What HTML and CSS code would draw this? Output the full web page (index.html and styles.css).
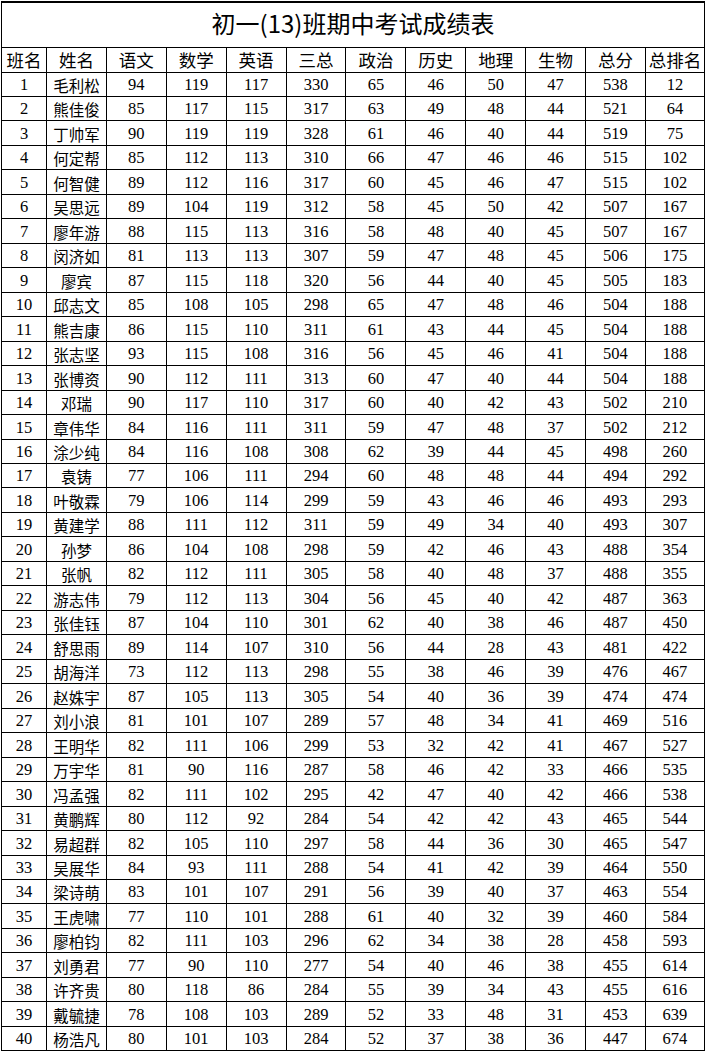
FILE: index.html
```html
<!DOCTYPE html>
<html lang="zh-CN">
<head>
<meta charset="utf-8">
<title>初一(13)班期中考试成绩表</title>
<link rel="stylesheet" href="styles.css">
</head>
<body>
<table class="sheet">
  <colgroup>
    <col class="c-no"><col class="c-w"><col class="c-w"><col class="c-w"><col class="c-w"><col class="c-w"><col class="c-w"><col class="c-w"><col class="c-w"><col class="c-w"><col class="c-w"><col class="c-last">
  </colgroup>
  <thead>
    <tr class="title-row"><th colspan="12" class="title">初一(13)班期中考试成绩表</th></tr>
    <tr class="head-row"><th>班名</th><th>姓名</th><th>语文</th><th>数学</th><th>英语</th><th>三总</th><th>政治</th><th>历史</th><th>地理</th><th>生物</th><th>总分</th><th>总排名</th></tr>
  </thead>
  <tbody id="rows">
    <tr><td>1</td><td class="nm">毛利松</td><td>94</td><td>119</td><td>117</td><td>330</td><td>65</td><td>46</td><td>50</td><td>47</td><td>538</td><td>12</td></tr>
    <tr><td>2</td><td class="nm">熊佳俊</td><td>85</td><td>117</td><td>115</td><td>317</td><td>63</td><td>49</td><td>48</td><td>44</td><td>521</td><td>64</td></tr>
    <tr><td>3</td><td class="nm">丁帅军</td><td>90</td><td>119</td><td>119</td><td>328</td><td>61</td><td>46</td><td>40</td><td>44</td><td>519</td><td>75</td></tr>
    <tr><td>4</td><td class="nm">何定帮</td><td>85</td><td>112</td><td>113</td><td>310</td><td>66</td><td>47</td><td>46</td><td>46</td><td>515</td><td>102</td></tr>
    <tr><td>5</td><td class="nm">何智健</td><td>89</td><td>112</td><td>116</td><td>317</td><td>60</td><td>45</td><td>46</td><td>47</td><td>515</td><td>102</td></tr>
    <tr><td>6</td><td class="nm">吴思远</td><td>89</td><td>104</td><td>119</td><td>312</td><td>58</td><td>45</td><td>50</td><td>42</td><td>507</td><td>167</td></tr>
    <tr><td>7</td><td class="nm">廖年游</td><td>88</td><td>115</td><td>113</td><td>316</td><td>58</td><td>48</td><td>40</td><td>45</td><td>507</td><td>167</td></tr>
    <tr><td>8</td><td class="nm">闵济如</td><td>81</td><td>113</td><td>113</td><td>307</td><td>59</td><td>47</td><td>48</td><td>45</td><td>506</td><td>175</td></tr>
    <tr><td>9</td><td class="nm">廖宾</td><td>87</td><td>115</td><td>118</td><td>320</td><td>56</td><td>44</td><td>40</td><td>45</td><td>505</td><td>183</td></tr>
    <tr><td>10</td><td class="nm">邱志文</td><td>85</td><td>108</td><td>105</td><td>298</td><td>65</td><td>47</td><td>48</td><td>46</td><td>504</td><td>188</td></tr>
    <tr><td>11</td><td class="nm">熊吉康</td><td>86</td><td>115</td><td>110</td><td>311</td><td>61</td><td>43</td><td>44</td><td>45</td><td>504</td><td>188</td></tr>
    <tr><td>12</td><td class="nm">张志坚</td><td>93</td><td>115</td><td>108</td><td>316</td><td>56</td><td>45</td><td>46</td><td>41</td><td>504</td><td>188</td></tr>
    <tr><td>13</td><td class="nm">张博资</td><td>90</td><td>112</td><td>111</td><td>313</td><td>60</td><td>47</td><td>40</td><td>44</td><td>504</td><td>188</td></tr>
    <tr><td>14</td><td class="nm">邓瑞</td><td>90</td><td>117</td><td>110</td><td>317</td><td>60</td><td>40</td><td>42</td><td>43</td><td>502</td><td>210</td></tr>
    <tr><td>15</td><td class="nm">章伟华</td><td>84</td><td>116</td><td>111</td><td>311</td><td>59</td><td>47</td><td>48</td><td>37</td><td>502</td><td>212</td></tr>
    <tr><td>16</td><td class="nm">涂少纯</td><td>84</td><td>116</td><td>108</td><td>308</td><td>62</td><td>39</td><td>44</td><td>45</td><td>498</td><td>260</td></tr>
    <tr><td>17</td><td class="nm">袁铸</td><td>77</td><td>106</td><td>111</td><td>294</td><td>60</td><td>48</td><td>48</td><td>44</td><td>494</td><td>292</td></tr>
    <tr><td>18</td><td class="nm">叶敬霖</td><td>79</td><td>106</td><td>114</td><td>299</td><td>59</td><td>43</td><td>46</td><td>46</td><td>493</td><td>293</td></tr>
    <tr><td>19</td><td class="nm">黄建学</td><td>88</td><td>111</td><td>112</td><td>311</td><td>59</td><td>49</td><td>34</td><td>40</td><td>493</td><td>307</td></tr>
    <tr><td>20</td><td class="nm">孙梦</td><td>86</td><td>104</td><td>108</td><td>298</td><td>59</td><td>42</td><td>46</td><td>43</td><td>488</td><td>354</td></tr>
    <tr><td>21</td><td class="nm">张帆</td><td>82</td><td>112</td><td>111</td><td>305</td><td>58</td><td>40</td><td>48</td><td>37</td><td>488</td><td>355</td></tr>
    <tr><td>22</td><td class="nm">游志伟</td><td>79</td><td>112</td><td>113</td><td>304</td><td>56</td><td>45</td><td>40</td><td>42</td><td>487</td><td>363</td></tr>
    <tr><td>23</td><td class="nm">张佳钰</td><td>87</td><td>104</td><td>110</td><td>301</td><td>62</td><td>40</td><td>38</td><td>46</td><td>487</td><td>450</td></tr>
    <tr><td>24</td><td class="nm">舒思雨</td><td>89</td><td>114</td><td>107</td><td>310</td><td>56</td><td>44</td><td>28</td><td>43</td><td>481</td><td>422</td></tr>
    <tr><td>25</td><td class="nm">胡海洋</td><td>73</td><td>112</td><td>113</td><td>298</td><td>55</td><td>38</td><td>46</td><td>39</td><td>476</td><td>467</td></tr>
    <tr><td>26</td><td class="nm">赵姝宇</td><td>87</td><td>105</td><td>113</td><td>305</td><td>54</td><td>40</td><td>36</td><td>39</td><td>474</td><td>474</td></tr>
    <tr><td>27</td><td class="nm">刘小浪</td><td>81</td><td>101</td><td>107</td><td>289</td><td>57</td><td>48</td><td>34</td><td>41</td><td>469</td><td>516</td></tr>
    <tr><td>28</td><td class="nm">王明华</td><td>82</td><td>111</td><td>106</td><td>299</td><td>53</td><td>32</td><td>42</td><td>41</td><td>467</td><td>527</td></tr>
    <tr><td>29</td><td class="nm">万宇华</td><td>81</td><td>90</td><td>116</td><td>287</td><td>58</td><td>46</td><td>42</td><td>33</td><td>466</td><td>535</td></tr>
    <tr><td>30</td><td class="nm">冯孟强</td><td>82</td><td>111</td><td>102</td><td>295</td><td>42</td><td>47</td><td>40</td><td>42</td><td>466</td><td>538</td></tr>
    <tr><td>31</td><td class="nm">黄鹏辉</td><td>80</td><td>112</td><td>92</td><td>284</td><td>54</td><td>42</td><td>42</td><td>43</td><td>465</td><td>544</td></tr>
    <tr><td>32</td><td class="nm">易超群</td><td>82</td><td>105</td><td>110</td><td>297</td><td>58</td><td>44</td><td>36</td><td>30</td><td>465</td><td>547</td></tr>
    <tr><td>33</td><td class="nm">吴展华</td><td>84</td><td>93</td><td>111</td><td>288</td><td>54</td><td>41</td><td>42</td><td>39</td><td>464</td><td>550</td></tr>
    <tr><td>34</td><td class="nm">梁诗萌</td><td>83</td><td>101</td><td>107</td><td>291</td><td>56</td><td>39</td><td>40</td><td>37</td><td>463</td><td>554</td></tr>
    <tr><td>35</td><td class="nm">王虎啸</td><td>77</td><td>110</td><td>101</td><td>288</td><td>61</td><td>40</td><td>32</td><td>39</td><td>460</td><td>584</td></tr>
    <tr><td>36</td><td class="nm">廖柏钧</td><td>82</td><td>111</td><td>103</td><td>296</td><td>62</td><td>34</td><td>38</td><td>28</td><td>458</td><td>593</td></tr>
    <tr><td>37</td><td class="nm">刘勇君</td><td>77</td><td>90</td><td>110</td><td>277</td><td>54</td><td>40</td><td>46</td><td>38</td><td>455</td><td>614</td></tr>
    <tr><td>38</td><td class="nm">许齐贵</td><td>80</td><td>118</td><td>86</td><td>284</td><td>55</td><td>39</td><td>34</td><td>43</td><td>455</td><td>616</td></tr>
    <tr><td>39</td><td class="nm">戴毓捷</td><td>78</td><td>108</td><td>103</td><td>289</td><td>52</td><td>33</td><td>48</td><td>31</td><td>453</td><td>639</td></tr>
    <tr><td>40</td><td class="nm">杨浩凡</td><td>80</td><td>101</td><td>103</td><td>284</td><td>52</td><td>37</td><td>38</td><td>36</td><td>447</td><td>674</td></tr>
  </tbody>
</table>
</body>
</html>
```

FILE: styles.css
```css
html, body {
  margin: 0;
  padding: 0;
  background: #ffffff;
}

body {
  padding: 1px 0 0 1px;
  color: #000000;
  font-family: "Liberation Serif", "Noto Sans CJK SC", serif;
}

.sheet {
  border-collapse: collapse;
  table-layout: fixed;
  width: 703px;
}

.c-no { width: 45px; }
.c-w { width: 59.9px; }
.c-last { width: 59px; }

.sheet th,
.sheet td {
  border: 1px solid #000;
  padding: 0;
  text-align: center;
  vertical-align: bottom;
  white-space: nowrap;
  line-height: 20px;
}

.sheet .title-row th {
  border-top: 2px solid #000;
}

.sheet .title-row {
  height: 45px;
}

.sheet th.title {
  font-family: "Noto Sans CJK SC", sans-serif;
  font-weight: 400;
  font-size: 24px;
  line-height: 30px;
  vertical-align: middle;
  padding: 0 0 4px 0;
}

.sheet .head-row {
  height: 25px;
}

.sheet .head-row th {
  font-family: "Noto Sans CJK SC", sans-serif;
  font-weight: 400;
  font-size: 17.5px;
  line-height: 22px;
  padding-bottom: 1px;
}

.sheet tbody tr {
  height: 24.475px;
}

.sheet td {
  font-size: 16.5px;
  padding-bottom: 1px;
}

.sheet td.nm {
  font-family: "Noto Sans CJK SC", sans-serif;
  font-size: 15.5px;
  padding-bottom: 1px;
}
```
